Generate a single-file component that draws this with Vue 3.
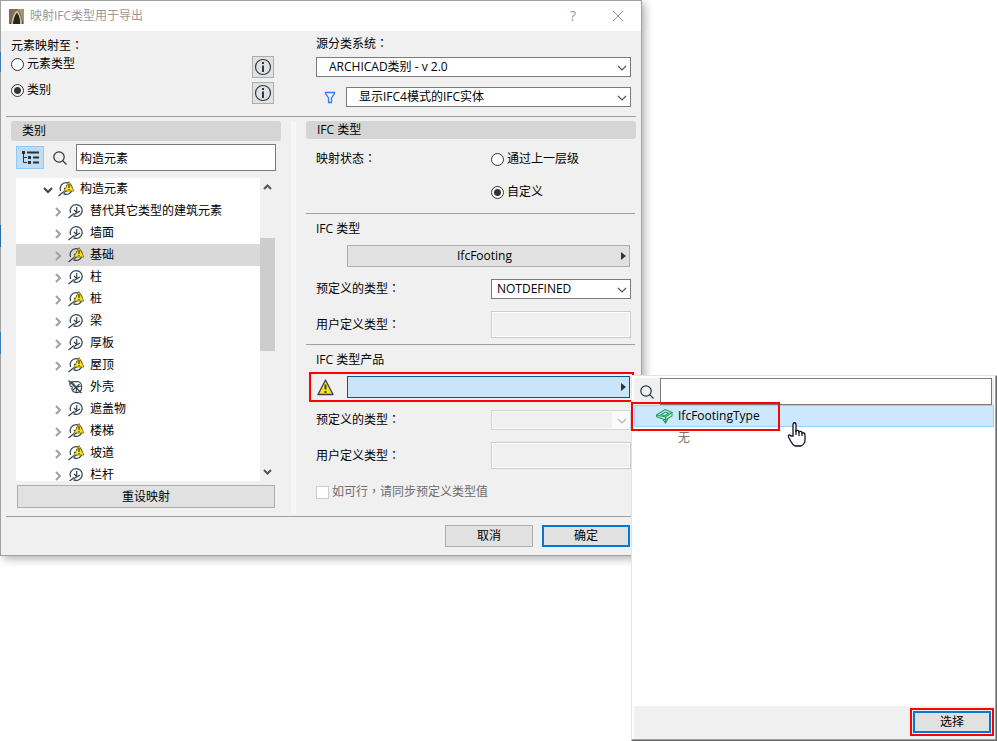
<template>
  <main class="desktop">
    <section class="dialog" aria-label="映射IFC类型用于导出">
      <header class="titlebar">
        <svg class="app-icon" width="15" height="15" viewBox="0 0 15 15">
          <rect width="15" height="15" fill="#473d30" />
          <path d="M0 0h8L4 6 1 15H0z" fill="#7b705a" />
          <path d="M8 0h7v15h-1C13 8 11 3 8 0z" fill="#a39674" />
          <path d="M2 15C3 8 5 3 8 1c3 3 5 8 5 14h-2c0-6-1-9-3-11-2 2-3 6-4 11z" fill="#c9bd98" />
          <path d="M4 15C5 9 6 6 8 4c2 3 3 7 3 11z" fill="#2a251d" />
        </svg>
        <h1>映射IFC类型用于导出</h1>
        <button class="title-btn help" aria-label="帮助">?</button>
        <button class="title-btn" aria-label="关闭">
          <svg width="12" height="12" viewBox="0 0 12 12"><path d="M1 1l10 10M11 1L1 11" stroke="#8f8f8f" fill="none" /></svg>
        </button>
      </header>

      <div class="top columns">
        <fieldset class="mapping">
          <legend>元素映射至<span class="punct">：</span></legend>
          <div v-for="opt in mapOptions" :key="opt.id" class="map-row">
            <label><input v-model="mapTo" type="radio" name="mapTo" :value="opt.id" />{{ opt.label }}</label>
            <button class="info" :aria-label="opt.label + '信息'">
              <svg width="18" height="18" viewBox="0 0 18 18">
                <circle cx="9" cy="9" r="7.5" fill="none" stroke="#2d3a41" stroke-width="1.2" />
                <path d="M9 4v2M9 7.5V14" stroke="#2d3a41" stroke-width="2" />
              </svg>
            </button>
          </div>
        </fieldset>
        <div class="source">
          <label for="source">源分类系统<span class="punct">：</span></label>
          <div class="combo">
            <select id="source"><option>ARCHICAD类别 - v 2.0</option></select>
            <svg class="chev" width="10" height="6" viewBox="0 0 10 6"><path d="M1 1l4 4 4-4" /></svg>
          </div>
          <div class="filter-row">
            <svg width="12" height="13" viewBox="0 0 12 13"><path d="M1.500 1.500h9v1L7.500 7v4.500h-3V7l-3-4.500z" fill="none" stroke="#2b7df9" stroke-width="1.300" /></svg>
            <div class="combo">
              <select aria-label="IFC模式"><option>显示IFC4模式的IFC实体</option></select>
              <svg class="chev" width="10" height="6" viewBox="0 0 10 6"><path d="M1 1l4 4 4-4" /></svg>
            </div>
          </div>
        </div>
      </div>

      <div class="middle columns">
        <section class="left">
          <h2 class="bar bar-tall">类别</h2>
          <div class="search-row">
            <button class="tree-mode" aria-label="树形视图">
              <svg width="17" height="13" viewBox="0 0 17 13">
                <path d="M0 0h3v3H0zM6 5h3v3H6zM6 10h3v3H6z" fill="#26323a" />
                <path d="M5 1.500h12M11 6.500h6M11 11.500h6" stroke="#26323a" stroke-width="2" />
                <path d="M1.500 3v8.500H5M1.500 6.500H5" fill="none" stroke="#26323a" />
              </svg>
            </button>
            <svg width="14" height="14" viewBox="0 0 14 14"><g fill="none" stroke="#26323a" stroke-width="1.200"><circle cx="6" cy="6" r="5.200" /><path d="M9.700 9.700L13.500 13.500" /></g></svg>
            <input v-model="query" type="text" aria-label="搜索类别" />
          </div>
          <div class="tree-box">
            <ul class="tree">
              <li v-for="node in nodes" :key="node.name" :class="{ root: node.root, selected: node.name === selected }" @click="selected = node.name">
                <svg class="arrow" width="10" height="10" viewBox="0 0 10 10">
                  <path v-if="node.root" d="M1 3l4 4 4-4" stroke="#404040" />
                  <path v-else-if="node.icon !== 'none'" d="M3 1l4 4-4 4" stroke="#a0a0a0" />
                </svg>
                <svg class="node-icon" width="17" height="16" viewBox="0 0 17 16">
                  <g fill="none" stroke="#34444c" stroke-width="1.2">
                    <template v-if="node.icon === 'none'">
                      <path d="M.5 1.500L13.500 14M4 8C1 7 1 3 4 2.800l6-.3c3 .5 4 4 3.500 7-.5 3-3 4.500-6 4-3-.5-4.500-3-3-5.500z" />
                      <path d="M5 11l6.500-6M8 13.500L9 8l4.500-1M4 3l4 5" />
                    </template>
                    <template v-else>
                      <path d="M.5 15L6 10.500M2.600 10C1 5.500 4 1.600 8.200 1.600c3.500 0 6 2.700 6 6 0 4-4.500 7.200-8.700 5" />
                      <path d="M8.700 4v6M12 8L6 11.500M8.700 9.500L6 7" />
                    </template>
                  </g>
                  <g v-if="node.icon === 'warn'">
                    <path d="M11 .5L16 10H6z" fill="#ffdf10" stroke="#77701c" stroke-width=".8" />
                    <path d="M11 3v4M11 8v1.200" stroke="#3a3a20" stroke-width="1.200" />
                  </g>
                </svg>
                <span>{{ node.name }}</span>
              </li>
            </ul>
            <div class="scroll">
              <svg width="9" height="6" viewBox="0 0 9 6"><path d="M1 5l3.500-3.500L8 5" /></svg>
              <div class="thumb"></div>
              <svg width="9" height="6" viewBox="0 0 9 6"><path d="M1 1l3.500 3.500L8 1" /></svg>
            </div>
          </div>
          <button class="btn reset">重设映射</button>
        </section>

        <div class="splitter"></div>

        <section class="right">
          <h2 class="bar">IFC 类型</h2>
          <div class="status" role="radiogroup" aria-labelledby="status-label">
            <span id="status-label">映射状态<span class="punct">：</span></span>
            <div class="choices">
              <label><input v-model="status" type="radio" name="status" value="parent" />通过上一层级</label>
              <label><input v-model="status" type="radio" name="status" value="custom" />自定义</label>
            </div>
          </div>

          <div class="group">
            <h3>IFC 类型</h3>
            <div class="type-row">
              <button class="btn picker">IfcFooting<i class="tri"></i></button>
            </div>
            <div class="field">
              <label for="pre1">预定义的类型<span class="punct">：</span></label>
              <div class="combo small">
                <select id="pre1"><option>NOTDEFINED</option></select>
                <svg class="chev" width="10" height="6" viewBox="0 0 10 6"><path d="M1 1l4 4 4-4" /></svg>
              </div>
            </div>
            <div class="field">
              <label for="user1">用户定义类型<span class="punct">：</span></label>
              <input id="user1" type="text" disabled />
            </div>
          </div>

          <div class="group">
            <h3>IFC 类型产品</h3>
            <div class="type-row marked">
              <svg width="17" height="17" viewBox="0 0 17 17">
                <path d="M8.500 1L16 15.500H1z" fill="#ffe11a" stroke="#34444c" stroke-width="1.300" stroke-linejoin="round" />
                <path d="M8.500 5.500v5M8.500 12v2" stroke="#34444c" stroke-width="2" />
              </svg>
              <button class="btn picker open" aria-label="IFC 类型产品"><i class="tri"></i></button>
            </div>
            <div class="field">
              <label for="pre2">预定义的类型<span class="punct">：</span></label>
              <div class="combo small off">
                <select id="pre2" disabled></select>
                <svg class="chev" width="10" height="6" viewBox="0 0 10 6"><path d="M1 1l4 4 4-4" /></svg>
              </div>
            </div>
            <div class="field">
              <label for="user2">用户定义类型<span class="punct">：</span></label>
              <input id="user2" type="text" disabled />
            </div>
            <label class="sync"><input type="checkbox" disabled /><span>如可行<span class="punct">，</span>请同步预定义类型值</span></label>
          </div>
        </section>
      </div>

      <footer class="actions">
        <button class="btn">取消</button>
        <button class="btn primary">确定</button>
      </footer>
    </section>

    <section class="popup">
      <div class="popup-search">
        <svg width="14" height="14" viewBox="0 0 14 14"><g fill="none" stroke="#26323a" stroke-width="1.200"><circle cx="6" cy="6" r="5.200" /><path d="M9.700 9.700L13.500 13.500" /></g></svg>
        <input type="text" aria-label="搜索类型" />
      </div>
      <ul class="options">
        <li class="active">
          <svg width="17" height="16" viewBox="0 0 17 16">
            <path d="M1 7l6 4 2 4 6-3 1-4V5L9 9z" fill="#d5f3df" />
            <g fill="none" stroke="#19a35b" stroke-width="1.100">
              <path d="M.5 7L9 1.500 16 4.500 9.500 9z" />
              <path d="M5 6.800L9.300 4l3.200 1.200-3.500 2.500zM.5 7v1.500L9.500 12l6.500-4V4.500M9.500 9v6M7 11.500l2.500 3.500 2.500-4" />
            </g>
          </svg>
          <span>IfcFootingType</span>
          <b class="mark"></b>
        </li>
        <li class="none">无</li>
      </ul>
      <svg class="cursor" width="20" height="25" viewBox="0 0 20 25">
        <path d="M6 14V3c0-3 3-3 3 0v6c1-1 3-1 3 1 1-1 3-1 3 1 1-1 3 0 3 2v5c0 3-2 5-4 6H8c-2-1-4-4-6-8-2-3 1-4 2-2z" fill="#fff" stroke="#111122" stroke-width="1.300" />
        <path d="M9 8v5M12 10v4M15 11v3" stroke="#111122" stroke-width="1.200" />
      </svg>
      <footer class="popup-foot">
        <div class="choose"><button class="btn primary">选择</button></div>
      </footer>
    </section>
  </main>
</template>

<script setup>
import { ref } from 'vue'

const mapTo = ref('class')
const status = ref('custom')
const query = ref('构造元素')
const selected = ref('基础')

const mapOptions = [
  { id: 'type', label: '元素类型' },
  { id: 'class', label: '类别' }
]

const nodes = [
  { name: '构造元素', icon: 'warn', root: true },
  { name: '替代其它类型的建筑元素', icon: 'plain' },
  { name: '墙面', icon: 'plain' },
  { name: '基础', icon: 'warn' },
  { name: '柱', icon: 'plain' },
  { name: '桩', icon: 'warn' },
  { name: '梁', icon: 'plain' },
  { name: '厚板', icon: 'plain' },
  { name: '屋顶', icon: 'warn' },
  { name: '外壳', icon: 'none' },
  { name: '遮盖物', icon: 'plain' },
  { name: '楼梯', icon: 'warn' },
  { name: '坡道', icon: 'warn' },
  { name: '栏杆', icon: 'plain' }
]
</script>

<style>
body {
  margin: 0;
  background: #fff;
}
</style>

<style scoped>
* {
  box-sizing: border-box;
}
.desktop {
  position: relative;
  min-height: 100vh;
  font: 12px/18px "Open Sans", "Noto Sans CJK SC", sans-serif;
  color: #000;
}
/* sliver of the window behind the dialog */
.desktop::before {
  content: "";
  position: absolute;
  left: 0;
  top: 0;
  width: 1px;
  height: 555px;
  background: linear-gradient(#a0a0a0 52px, #3c78b4 52px 72px, #a0a0a0 72px 225px, #2a6ca8 225px 247px, #a0a0a0 247px 332px, #3c78b4 332px 354px, #a0a0a0 354px);
}
button, input, select {
  font: inherit;
  color: inherit;
  margin: 0;
}
svg {
  display: block;
  flex: none;
}
h1, h2, h3 {
  margin: 0;
  font-size: 12px;
  font-weight: 400;
}
ul {
  margin: 0;
  padding: 0;
  list-style: none;
}
fieldset {
  border: 0;
  margin: 0;
  padding: 0;
  min-width: 0;
}
legend {
  padding: 0;
}
/* centred full-width punctuation */
.punct {
  font-family: "Noto Sans CJK TC", sans-serif;
  line-height: 1;
}
.dialog {
  width: calc(100vw - 355px);
  min-width: 560px;
  border: 1px solid #a0a0a0;
  background: #f0f0f0;
  box-shadow: 3px 3px 8px rgba(0, 0, 0, 0.3);
}
.titlebar {
  display: flex;
  align-items: center;
  height: 30px;
  padding: 0 8px;
  background: #fff;
  color: #999;
}
.titlebar h1 {
  flex: 1;
  margin-left: 6px;
}
.title-btn {
  display: flex;
  align-items: center;
  justify-content: center;
  width: 30px;
  height: 28px;
  padding: 0;
  border: 0;
  background: none;
}
.help {
  margin-right: 15px;
  font-size: 14px;
}
.columns {
  display: grid;
  grid-template-columns: 270fr 5px 330fr;
  column-gap: 10px;
  padding: 0 5px 0 10px;
}
.top {
  height: 86px;
  margin: 0 5px;
  padding: 4px 0 0 5px;
  border-bottom: 1px solid #a0a0a0;
}
.mapping legend {
  padding-top: 2px;
}
.map-row {
  display: flex;
  justify-content: space-between;
  align-items: flex-start;
  height: 26px;
  padding-right: 7px;
}
.map-row label, .choices label, .sync {
  display: flex;
  align-items: center;
  gap: 3px;
}
input[type="radio"] {
  appearance: none;
  flex: none;
  width: 13px;
  height: 13px;
  border: 1px solid #333;
  border-radius: 50%;
  background: #fff;
}
input[type="radio"]:checked {
  background: radial-gradient(circle, #333 0 3px, #fff 4px);
}
.info {
  display: flex;
  align-items: center;
  justify-content: center;
  width: 22px;
  height: 22px;
  margin-top: 1px;
  padding: 0;
  border: 1px solid #adadad;
  background: #e1e1e1;
}
.source {
  grid-column: 3;
  padding: 0 5px 0 10px;
}
.source > label {
  display: block;
  height: 22px;
}
.combo {
  position: relative;
  flex: 1;
}
.combo select {
  appearance: none;
  display: block;
  width: 100%;
  height: 20px;
  padding: 0 20px 0 12px;
  border: 1px solid #7a7a7a;
  border-radius: 0;
  background: #fff;
}
.chev {
  position: absolute;
  right: 4px;
  top: 8px;
  pointer-events: none;
}
.chev path {
  fill: none;
  stroke: #555;
  stroke-width: 1.2;
}
.filter-row {
  display: flex;
  align-items: center;
  gap: 10px;
  margin-top: 10px;
  padding-left: 8px;
}
.middle {
  margin-top: 4px;
}
.bar {
  height: 18px;
  padding-left: 11px;
  border-radius: 3px;
  background: #d5d5d5;
}
.bar-tall {
  height: 20px;
  line-height: 20px;
}
.left {
  display: flex;
  flex-direction: column;
}
.search-row {
  display: flex;
  align-items: center;
  gap: 9px;
  margin: 3px 5px 7px;
}
.search-row input {
  flex: 1;
  min-width: 0;
  height: 27px;
  padding: 0 3px;
  border: 1px solid #7a7a7a;
}
.tree-mode {
  display: flex;
  align-items: center;
  justify-content: center;
  width: 28px;
  height: 23px;
  padding: 0;
  border: 1px solid #90c8f6;
  background: #c0dcf3;
}
.tree-box {
  display: flex;
  height: 303px;
  margin: 0 6px 0 5px;
}
.tree {
  flex: 1;
  overflow: hidden;
  background: #fff;
}
.tree li {
  display: flex;
  align-items: center;
  height: 22px;
  padding-left: 37px;
}
.tree li.root {
  padding-left: 27px;
}
.tree li.selected {
  background: #d9d9d9;
}
.arrow {
  margin-top: 2px;
}
.arrow path {
  fill: none;
  stroke-width: 2;
}
.node-icon {
  margin: 0 5px;
}
.scroll {
  display: grid;
  grid-template-rows: 6px 113px 6px;
  align-content: space-between;
  justify-items: center;
  width: 15px;
  padding: 6px 0;
}
.scroll path {
  fill: none;
  stroke: #555;
  stroke-width: 2;
}
.thumb {
  width: 15px;
  height: 113px;
  margin-top: -35px;
  background: #cdcdcd;
}
.btn {
  height: 22px;
  padding: 0;
  border: 1px solid #adadad;
  background: #e1e1e1;
  line-height: 18px;
}
.reset {
  height: 23px;
  margin: 4px 6px 0;
}
.splitter {
  height: 393px;
  background: #f7f7f7;
}
.status {
  display: grid;
  grid-template-columns: 1fr 140px;
  padding: 11px 5px 12px 10px;
}
.choices {
  display: grid;
  gap: 15px;
}
.group {
  margin-right: 1px;
  padding-top: 6px;
  border-top: 1px solid #a0a0a0;
}
.group h3 {
  padding-left: 10px;
}
.type-row {
  display: flex;
  align-items: center;
  justify-content: flex-end;
  margin-top: 7px;
  padding-right: 5px;
}
.picker {
  position: relative;
  width: calc(100% - 41px);
  padding-right: 8px;
}
.tri {
  position: absolute;
  right: 3px;
  top: 6px;
  border: 4px solid transparent;
  border-left: 5px solid #333;
  border-right: 0;
}
.picker.open {
  flex: 1;
  border-color: #00559b;
  background: #cce4f7;
}
.marked {
  gap: 13px;
  margin: 3px 1px 4px 3px;
  padding: 2px 2px 2px 6px;
  border: 2px solid #f00;
}
.field {
  display: grid;
  grid-template-columns: 1fr 140px;
  align-items: center;
  margin-top: 12px;
  padding: 0 4px 0 10px;
}
.group .field:last-child {
  margin-bottom: 6px;
}
.type-row.marked + .field {
  margin-top: 8px;
}
.field input {
  width: 100%;
  height: 27px;
  border: 1px solid #ccc;
  background: #f0f0f0;
  box-shadow: inset 0 0 0 1px #fff;
}
.combo.small select {
  padding-left: 5px;
}
.combo.off select {
  border-color: #ccc;
  background: linear-gradient(#f0f0f0, #f0f0f0) 1px 1px / calc(100% - 19px) calc(100% - 2px) no-repeat #fff;
}
.combo.off .chev path {
  stroke: #b5b5b5;
}
.sync {
  margin: 14px 0 0 10px;
  color: #6d6d6d;
}
.sync input {
  appearance: none;
  width: 13px;
  height: 13px;
  border: 1px solid #ccc;
  background: #fff;
}
.actions {
  display: flex;
  justify-content: flex-end;
  gap: 9px;
  margin: 2px 5px 0;
  padding: 8px 6px;
  border-top: 1px solid #a0a0a0;
}
.actions .btn {
  width: 88px;
}
.btn.primary {
  border: 2px solid #0078d7;
}
.popup {
  position: absolute;
  top: 375px;
  right: 0;
  bottom: 0;
  width: 366px;
  display: flex;
  flex-direction: column;
  padding: 2px 2px 0;
  border: 1px solid #e3e3e3;
  border-right-color: #696969;
  border-bottom-color: #696969;
  background: #fff;
  box-shadow: inset -1px -1px 0 #a0a0a0;
}
.popup-search {
  display: flex;
  align-items: center;
  gap: 6px;
  padding: 0 2px 0 6px;
  background: #f0f0f0;
}
.popup-search input {
  flex: 1;
  min-width: 0;
  height: 27px;
  border: 1px solid #7a7a7a;
}
.options {
  flex: 1;
}
.options li {
  position: relative;
  display: flex;
  align-items: center;
  gap: 5px;
  height: 22px;
  padding-left: 21px;
}
.options .active {
  border: 1px solid #99d1ff;
  background: #cce8ff;
}
.options .none {
  padding-left: 44px;
  color: #7d7268;
}
.mark {
  position: absolute;
  left: -4px;
  top: -4px;
  width: 149px;
  height: 29px;
  border: 2px solid #f00;
}
.cursor {
  position: absolute;
  left: 155px;
  top: 46px;
}
.popup-foot {
  display: flex;
  justify-content: flex-end;
  height: 33px;
  margin-bottom: 1px;
  padding-top: 2px;
  background: #f0f0f0;
}
.choose {
  height: 28px;
  padding: 1px;
  border: 2px solid #f00;
}
.choose .btn {
  width: 78px;
}
</style>
